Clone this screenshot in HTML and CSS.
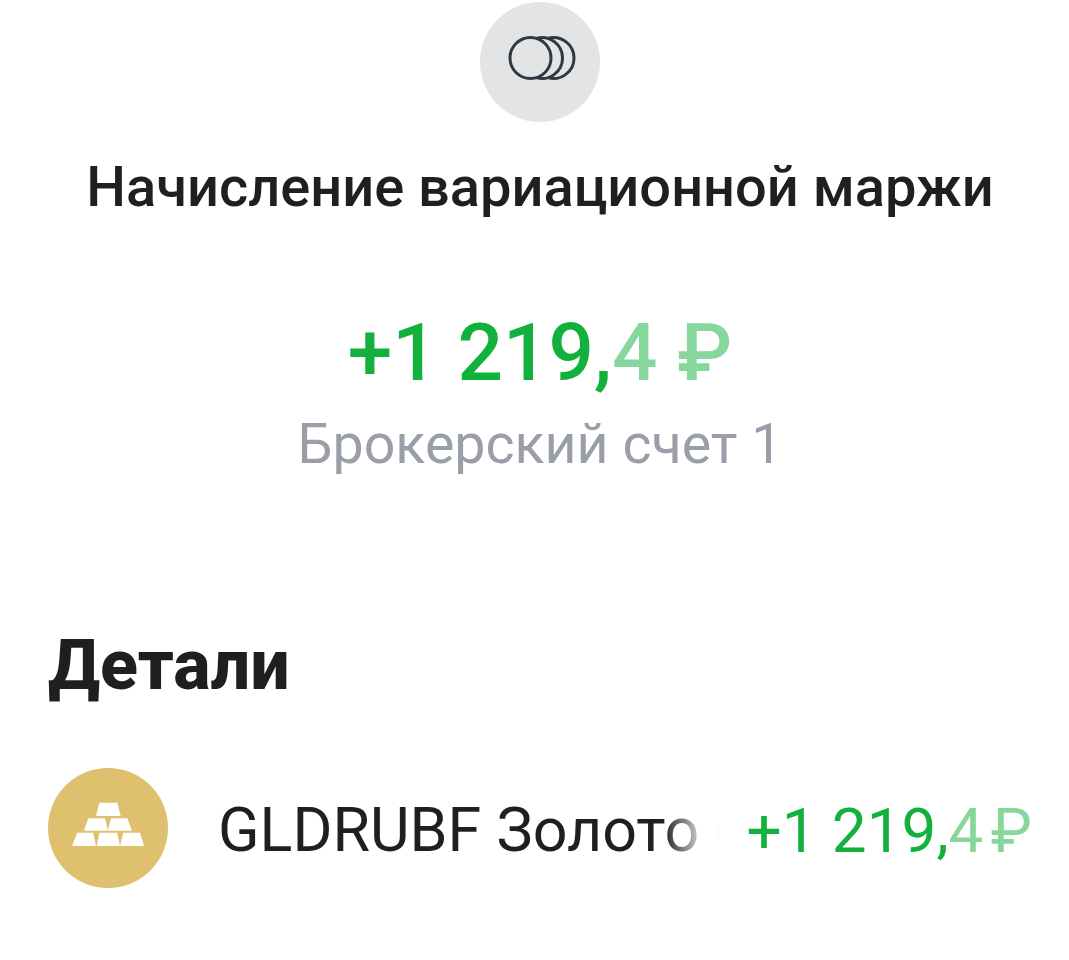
FILE: index.html
```html
<!DOCTYPE html>
<html lang="ru">
<head>
  <meta charset="UTF-8">
  <title>Начисление вариационной маржи</title>
  <link rel="stylesheet" href="styles.css">
</head>
<body>

  <div class="top">
    <div class="op-icon">
      <svg width="120" height="120" viewBox="0 0 120 120" fill="none" stroke="#333741" stroke-width="3">
        <circle cx="50.500" cy="56" r="20.500"/>
        <path d="M56.250 36.330A20.500 20.500 0 1 1 56.250 75.670"/>
        <path d="M67.750 36.330A20.500 20.500 0 1 1 67.750 75.670"/>
      </svg>
    </div>
    <h1>Начисление вариационной маржи</h1>
    <div class="amount">+1 219,<span class="fade">4 ₽</span></div>
    <div class="account">Брокерский счет 1</div>
  </div>

  <h2>Детали</h2>

  <div class="row">
    <div class="gold-icon">
      <svg width="120" height="120" viewBox="0 0 120 120" fill="#fff">
        <path d="M51.300 34.700H69.300L72.700 48H48Z"/>
        <path d="M40.300 50.300H57L60 62.700H36Z"/>
        <path d="M63 50.300H79.300L84 62.700H59.700Z"/>
        <path d="M29.300 64.700H45.300L48 78H24Z"/>
        <path d="M51.300 64.700H69.300L72 78H48.700Z"/>
        <path d="M75.300 64.700H92L96 78H72Z"/>
      </svg>
    </div>
    <div class="name">GLDRUBF Золото (</div>
    <div class="value">+1 219,<span class="fade">4<span class="tight"> </span>₽</span></div>
  </div>

</body>
</html>
```

FILE: styles.css
```css
body {
  margin: 0;
  padding: 2px 37px 0 48px;
  background: #fff;
  color: #1f1f1f;
  font-family: Roboto, "Liberation Sans", sans-serif;
}

.top {
  display: flex;
  flex-direction: column;
  align-items: center;
}

.op-icon {
  width: 120px;
  height: 120px;
  border-radius: 50%;
  background: #e2e4e5;
}

h1 {
  margin: 31px 0 0;
  font-size: 56px;
  line-height: 68px;
  font-weight: 500;
  white-space: nowrap;
}

.amount {
  margin-top: 86px;
  font-size: 80px;
  line-height: 92px;
  font-weight: 500;
  color: #12b03c;
}

.fade {
  opacity: 0.5;
}

.tight {
  word-spacing: -8px;
}

.account {
  margin-top: 12px;
  font-size: 55.500px;
  line-height: 68px;
  color: #9a9ea8;
}

h2 {
  margin: 146px 0 0;
  font-size: 70px;
  line-height: 80px;
  font-weight: 800;
}

.row {
  display: flex;
  align-items: center;
  margin-top: 63px;
}

.gold-icon {
  flex: none;
  width: 120px;
  height: 120px;
  border-radius: 50%;
  background: #dfc06f;
}

.name {
  flex: 1;
  min-width: 0;
  margin: 4px 27px 0 50px;
  font-size: 61px;
  white-space: nowrap;
  overflow: hidden;
  -webkit-mask-image: linear-gradient(90deg, #000 445px, rgba(0, 0, 0, 0.25) 480px, rgba(0, 0, 0, 0.08) 100%);
  mask-image: linear-gradient(90deg, #000 445px, rgba(0, 0, 0, 0.25) 480px, rgba(0, 0, 0, 0.08) 100%);
}

.value {
  flex: none;
  margin-top: 4px;
  font-size: 62px;
  color: #12b03c;
}
```
